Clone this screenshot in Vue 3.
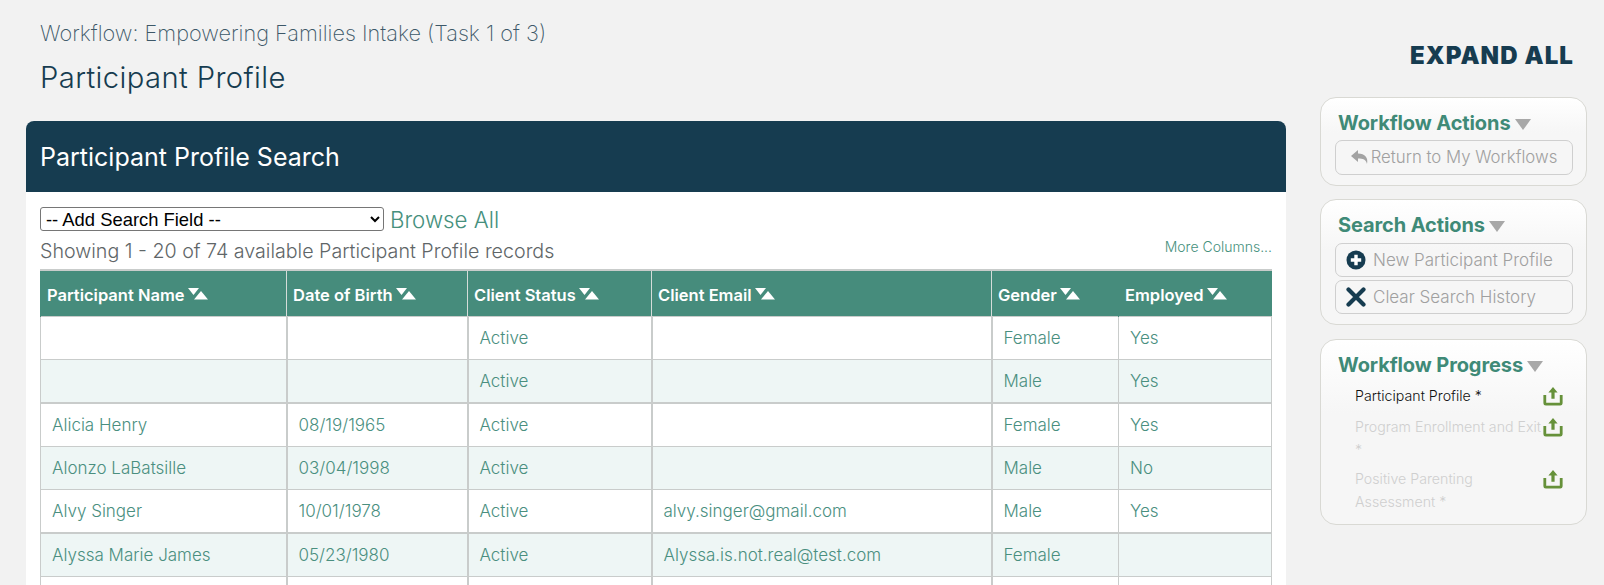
<template>
	<div class="page">
		<main class="main">
			<p class="workflow-line">Workflow: Empowering Families Intake (Task 1 of 3)</p>
			<h1 class="page-title">Participant Profile</h1>

			<section class="panel">
				<h2 class="panel-head">Participant Profile Search</h2>
				<div class="panel-body">
					<div class="search-row">
						<select class="field-select">
							<option>-- Add Search Field --</option>
						</select>
						<a class="browse">Browse All</a>
					</div>
					<div class="count-row">
						<span class="count">Showing 1 - 20 of 74 available Participant Profile records</span>
						<a class="more">More Columns...</a>
					</div>
					<table class="grid">
						<colgroup>
							<col v-for="col in columns" :key="col.label" :style="{ width: col.width + 'px' }" />
						</colgroup>
						<thead>
							<tr>
								<th v-for="col in columns" :key="col.label" :class="{ wide: col.wide }">
									{{ col.label }}
									<svg class="sort" viewBox="0 0 20 12" width="20" height="12">
										<path d="M0 0h11L5.500 7z" fill="#fff" />
										<path d="M13 3l7 8.500H6z" fill="#fff" />
									</svg>
								</th>
							</tr>
						</thead>
						<tbody>
							<tr v-for="(row, r) in rows" :key="r" :class="{ odd: r % 2 === 1, heavy: row.heavy }">
								<td v-for="(col, c) in columns" :key="col.label" :class="{ wide: col.wide }">{{ row.cells[c] }}</td>
							</tr>
						</tbody>
					</table>
				</div>
			</section>
		</main>

		<aside class="side">
			<a class="expand">EXPAND ALL</a>

			<section class="card">
				<h3 class="card-title">Workflow Actions<span class="caret"></span></h3>
				<button class="action center">
					<svg viewBox="0 0 18 16" width="18" height="16"><path d="M7 1L0 7l7 6V9.500c5 0 8 1 9 5.500 1.500-6-2-10.500-9-10.500z" fill="#a3a3a3" /></svg>
					Return to My Workflows
				</button>
			</section>

			<section class="card">
				<h3 class="card-title">Search Actions<span class="caret"></span></h3>
				<div class="stack">
					<button class="action">
						<svg viewBox="0 0 20 20" width="20" height="20">
							<circle cx="10" cy="10" r="9.500" fill="#163c50" />
							<path d="M8.300 4.800h3.400v3.500h3.500v3.400h-3.500v3.500H8.300v-3.500H4.800V8.300h3.500z" fill="#fff" />
						</svg>
						New Participant Profile
					</button>
					<button class="action">
						<svg viewBox="0 0 20 20" width="20" height="20">
							<path d="M2.500 2.500l15 15M17.500 2.500l-15 15" stroke="#163c50" stroke-width="4.200" stroke-linecap="round" fill="none" />
						</svg>
						Clear Search History
					</button>
				</div>
			</section>

			<section class="card progress">
				<h3 class="card-title">Workflow Progress<span class="caret"></span></h3>
				<ul class="steps">
					<li v-for="step in steps" :key="step.label" :class="{ current: step.current }" :style="{ height: step.height + 'px' }">
						<span class="step-label">{{ step.label }}</span>
						<svg class="upload" viewBox="0 0 20 20" width="20" height="20">
							<path d="M10 1l4.600 5.400h-3v6.400H8.400V6.400h-3z" fill="#66913a" />
							<path d="M1.800 9v8.200a1 1 0 0 0 1 1h14.400a1 1 0 0 0 1-1V9" stroke="#66913a" stroke-width="2.800" fill="none" />
						</svg>
					</li>
				</ul>
			</section>
		</aside>
	</div>
</template>

<script setup>
const columns = [
	{ label: "Participant Name", width: 246 },
	{ label: "Date of Birth", width: 181, wide: true },
	{ label: "Client Status", width: 184 },
	{ label: "Client Email", width: 340, wide: true },
	{ label: "Gender", width: 127 },
	{ label: "Employed", width: 153 },
];

const rows = [
	{ cells: ["", "", "Active", "", "Female", "Yes"] },
	{ cells: ["", "", "Active", "", "Male", "Yes"], heavy: true },
	{ cells: ["Alicia Henry", "08/19/1965", "Active", "", "Female", "Yes"] },
	{ cells: ["Alonzo LaBatsille", "03/04/1998", "Active", "", "Male", "No"] },
	{ cells: ["Alvy Singer", "10/01/1978", "Active", "alvy.singer@gmail.com", "Male", "Yes"], heavy: true },
	{ cells: ["Alyssa Marie James", "05/23/1980", "Active", "Alyssa.is.not.real@test.com", "Female", ""] },
	{ cells: ["", "", "", "", "", ""] },
];

const steps = [
	{ label: "Participant Profile *", current: true, height: 31 },
	{ label: "Program Enrollment and Exit *", height: 52 },
	{ label: "Positive Parenting Assessment *", height: 52 },
];
</script>

<style scoped>
.page {
	display: flex;
	align-items: flex-start;
	width: 1604px;
	height: 585px;
	overflow: hidden;
	background: #f2f2f2;
	font-family: "Inter", "Liberation Sans", sans-serif;
}

.main {
	width: 1260px;
	margin-left: 26px;
	flex: none;
}

.workflow-line {
	margin: 0;
	padding: 20px 0 0 14px;
	font-size: 21.700px;
	line-height: 27px;
	font-weight: 200;
	color: #3d5868;
}

.page-title {
	margin: 0;
	padding: 14px 0 0 14px;
	font-size: 29.200px;
	line-height: 34px;
	font-weight: 300;
	color: #163c50;
	letter-spacing: 0.4px;
}

.panel {
	margin-top: 26px;
	background: #fff;
	border-radius: 8px 8px 0 0;
}

.panel-head {
	margin: 0;
	height: 71px;
	padding-left: 14px;
	background: #163c50;
	border-radius: 8px 8px 0 0;
	color: #fff;
	font-size: 25px;
	line-height: 73px;
	font-weight: 400;
}

.panel-body {
	padding: 15px 14px 0;
}

.search-row {
	display: flex;
	align-items: center;
	gap: 6px;
	height: 24px;
}

.field-select {
	width: 344px;
	height: 24px;
	padding-left: 1px;
	font-family: "Liberation Sans", sans-serif;
	font-size: 18.400px;
	background: #fff;
	color: #000;
	border: 1px solid #767676;
	border-radius: 3px;
}

.browse {
	font-size: 22.300px;
	font-weight: 300;
	color: #46907d;
}

.count-row {
	display: flex;
	justify-content: space-between;
	align-items: flex-start;
	height: 38px;
	padding-top: 8px;
	box-sizing: border-box;
}

.count {
	font-size: 19.650px;
	font-weight: 300;
	line-height: 24px;
	color: #5f6668;
}

.more {
	font-size: 14px;
	font-weight: 300;
	line-height: 18px;
	margin-top: -1px;
	color: #46907d;
}

.grid {
	width: 1232px;
	table-layout: fixed;
	border-collapse: collapse;
	border-top: 2px solid #c9cccb;
}

.grid th {
	height: 43px;
	padding: 2px 6px 0;
	background: #468c7c;
	border-left: 1px solid #d5dcd9;
	color: #fff;
	font-size: 16.500px;
	font-weight: 600;
	text-align: left;
	white-space: nowrap;
}

.grid th:first-child,
.grid th:last-child {
	border-color: #468c7c;
}

.grid td {
	height: 42px;
	padding: 0 11px;
	border: 1px solid #c9cccb;
	font-size: 17px;
	font-weight: 300;
	color: #4a8f7f;
	white-space: nowrap;
	overflow: hidden;
}

.grid td.wide {
	border-right-width: 2px;
	border-left-width: 2px;
}

.grid tr.odd td {
	background: #eef6f5;
}

.grid tr.heavy td {
	border-bottom-width: 2px;
}

.sort {
	vertical-align: 1px;
	margin-left: -1px;
}

.side {
	width: 267px;
	margin-left: 34px;
	flex: none;
	display: flex;
	flex-direction: column;
}

.expand {
	align-self: flex-end;
	margin: 41px 13px 0 0;
	font-size: 24px;
	line-height: 30px;
	font-weight: 900;
	letter-spacing: 1.100px;
	color: #163c50;
}

.card {
	box-sizing: border-box;
	margin-bottom: 14px;
	padding: 0 14px 0 14px;
	border: 1px solid #d9d9d4;
	border-radius: 16px;
	background: linear-gradient(to bottom, #fff, #f6f6f6 40%, #f6f6f6);
}

.card:nth-of-type(1) {
	margin-top: 26px;
	margin-bottom: 13px;
	height: 89px;
}

.card:nth-of-type(1) .card-title {
	height: 42px;
}

.card:nth-of-type(2) {
	height: 126px;
}

.card.progress {
	height: 186px;
}

.card.progress .card-title {
	height: 44px;
}

.card-title {
	margin: 0;
	padding: 12px 0 0 3px;
	height: 43px;
	box-sizing: border-box;
	font-size: 20px;
	line-height: 27px;
	font-weight: 650;
	letter-spacing: -0.100px;
	color: #3f8a77;
}

.caret {
	display: inline-block;
	margin-left: 4px;
	width: 0;
	height: 0;
	border-left: 8px solid transparent;
	border-right: 8px solid transparent;
	border-top: 11px solid #a8a8a8;
}

.stack {
	display: flex;
	flex-direction: column;
	gap: 3px;
}

.action {
	display: flex;
	align-items: center;
	gap: 7px;
	width: 238px;
	height: 34px;
	padding: 0 0 1px 10px;
	border: 1px solid #cfcfcf;
	border-radius: 7px;
	background: transparent;
	font-family: inherit;
	font-size: 17px;
	font-weight: 300;
	color: #a0a0a0;
	white-space: nowrap;
}

.action.center {
	height: 35px;
	justify-content: center;
	padding: 0 0 2px;
	gap: 2px;
	font-size: 16.800px;
}

.steps {
	list-style: none;
	margin: 0;
	padding: 0 0 0 20px;
}

.steps li {
	display: flex;
	justify-content: space-between;
	align-items: flex-start;
	font-size: 14.200px;
	line-height: 23px;
	font-weight: 300;
	color: #cfcfcf;
}

.steps li.current {
	color: #111;
}

.step-label {
	width: 188px;
}

.upload {
	flex: none;
	margin-right: 9px;
	margin-top: 2px;
}
</style>

<style>
html,
body {
	margin: 0;
	overflow: hidden;
}
</style>
